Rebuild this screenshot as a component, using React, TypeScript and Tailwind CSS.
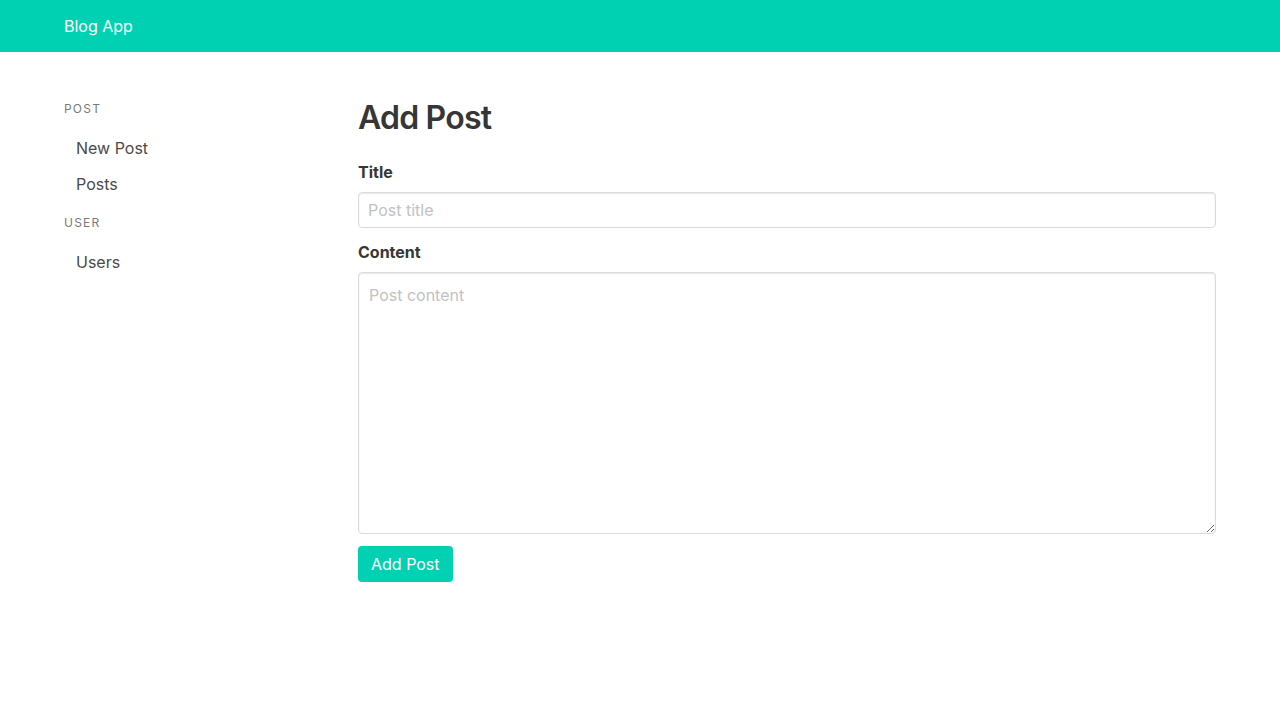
import { useState } from 'react';

const menu = [
  { label: 'Post', items: ['New Post', 'Posts'] },
  { label: 'User', items: ['Users'] },
];

export default function App() {
  const [title, setTitle] = useState('');
  const [content, setContent] = useState('');

  return (
    <div className="min-h-screen bg-white text-[#4a4a4a]" style={{ fontFamily: 'Inter, "Noto Sans", sans-serif' }}>
      <nav className="h-[52px] bg-[#00d1b2]">
        <div className="max-w-[1152px] mx-auto h-full flex items-center">
          <a className="text-white text-base leading-6">Blog App</a>
        </div>
      </nav>

      <section className="max-w-[1152px] mx-auto pt-12 flex">
        {/* Sidebar */}
        <aside className="w-[270px] shrink-0">
          {menu.map((group, gi) => (
            <div key={group.label}>
              <p className={`text-xs leading-[18px] uppercase tracking-[0.1em] text-[#7a7a7a] mb-3 ${gi > 0 ? 'mt-3' : ''}`}>
                {group.label}
              </p>
              <ul>
                {group.items.map(item => (
                  <li key={item}>
                    <a className="block px-3 py-2 text-base leading-5 text-[#4a4a4a] rounded-sm hover:bg-[#f5f5f5]">{item}</a>
                  </li>
                ))}
              </ul>
            </div>
          ))}
        </aside>

        {/* Main */}
        <main className="flex-1 ml-[24px]">
          <h1 className="text-[32px] leading-9 font-semibold tracking-[-0.025em] text-[#363636] mb-6">Add Post</h1>

          <div className="mb-3">
            <label className="block text-base leading-6 font-bold text-[#363636] mb-2">Title</label>
            <input
              value={title}
              onChange={e => setTitle(e.target.value)}
              placeholder="Post title"
              className="w-full h-9 px-[9px] border border-[#dbdbdb] rounded text-base text-[#363636] shadow-[inset_0_1px_2px_rgba(10,10,10,0.1)] placeholder:text-[#c2c2c2] focus:outline-none"
            />
          </div>

          <div className="mb-3">
            <label className="block text-base leading-6 font-bold text-[#363636] mb-2">Content</label>
            <textarea
              value={content}
              onChange={e => setContent(e.target.value)}
              placeholder="Post content"
              className="block w-full h-[262px] px-[10px] py-[10px] border border-[#dbdbdb] rounded text-base leading-6 text-[#363636] shadow-[inset_0_1px_2px_rgba(10,10,10,0.1)] placeholder:text-[#c2c2c2] focus:outline-none"
            />
          </div>

          <button className="h-9 px-[13px] bg-[#00d1b2] text-white text-base rounded hover:bg-[#00c4a7]">
            Add Post
          </button>
        </main>
      </section>
    </div>
  );
}
